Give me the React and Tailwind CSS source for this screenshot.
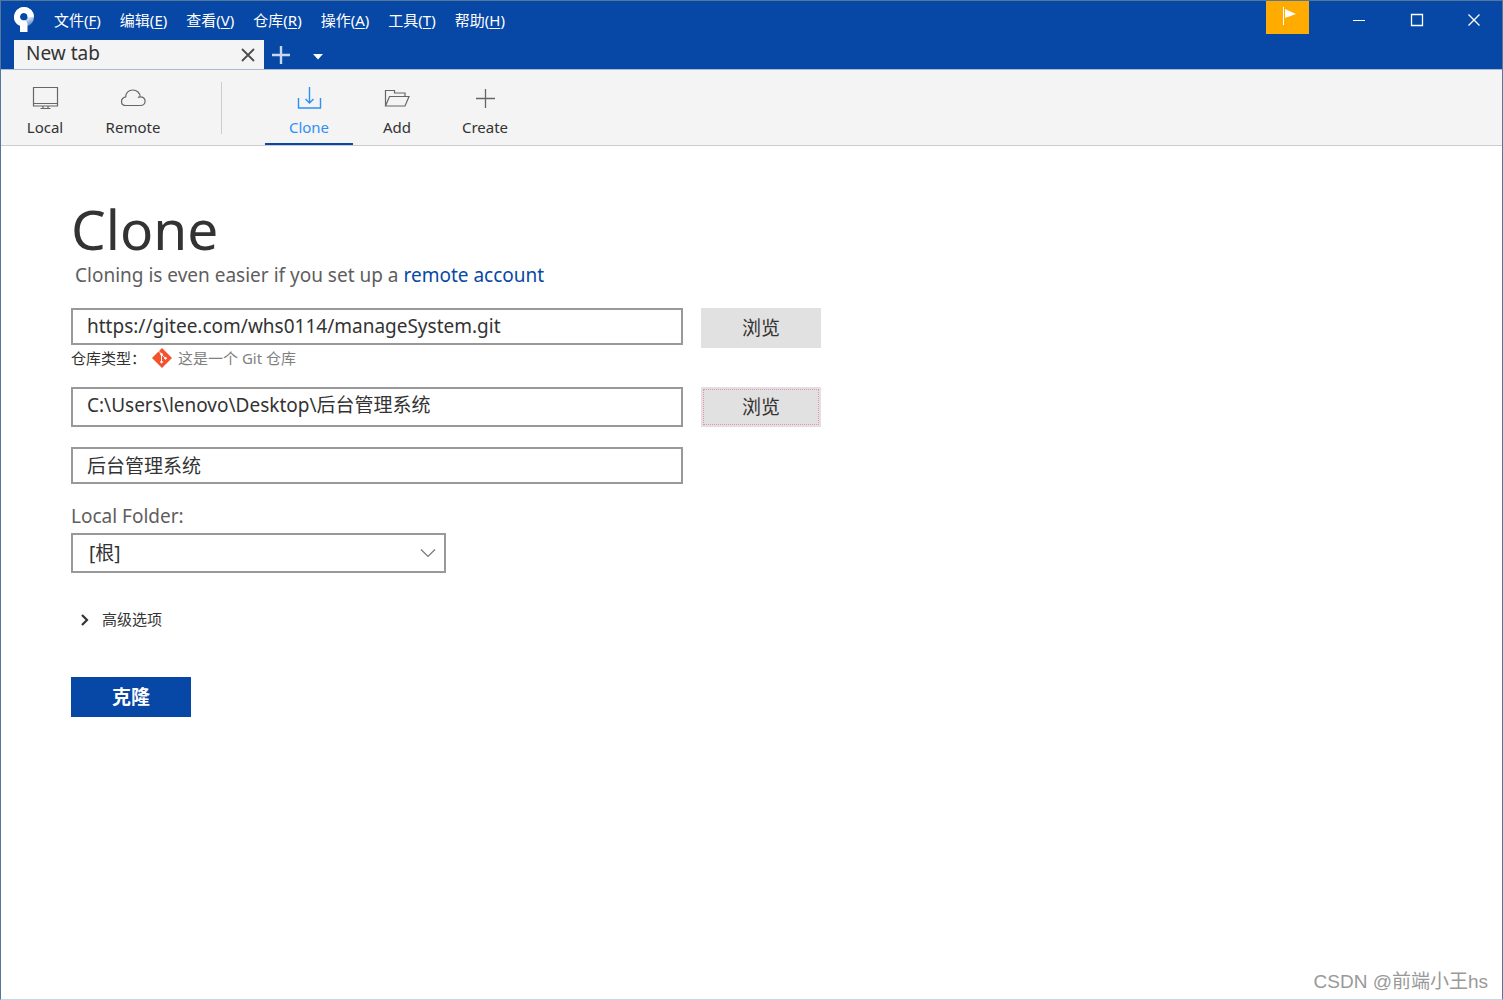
const menus = [
  { label: '文件', hotkey: 'F' },
  { label: '编辑', hotkey: 'E' },
  { label: '查看', hotkey: 'V' },
  { label: '仓库', hotkey: 'R' },
  { label: '操作', hotkey: 'A' },
  { label: '工具', hotkey: 'T' },
  { label: '帮助', hotkey: 'H' },
];

function Logo() {
  return (
    <svg width="20" height="25" viewBox="0 0 20 25" aria-hidden="true">
      <defs>
        <linearGradient id="ring" gradientUnits="userSpaceOnUse" x1="12" y1="10" x2="16" y2="19">
          <stop offset="0" stopColor="#ffffff" />
          <stop offset="1" stopColor="#4a7cc9" />
        </linearGradient>
      </defs>
      <path
        fill="url(#ring)"
        fillRule="evenodd"
        d="M10 0a10 10 0 1 1 0 20A10 10 0 0 1 10 0zm-.2 6a3.800 3.800 0 1 0 0 7.600A3.800 3.800 0 0 0 9.800 6z"
      />
      <path
        fill="#ffffff"
        d="M10 0a10 10 0 0 0-10 10c0 4 2.300 7 6 8.600V25h7.500v-7.500c0-1.500-.7-2.700-2-3.900H9.800A3.800 3.800 0 1 1 13.600 9.800H20A10 10 0 0 0 10 0z"
      />
    </svg>
  );
}

function MonitorIcon() {
  return (
    <svg width="28" height="24" viewBox="0 0 28 24" fill="none" stroke="currentColor" strokeWidth="1.200" aria-hidden="true">
      <path d="M2.500 1.500h24v18.500h-24zM2.500 17.500h24M12 20v2M17 20v2M9.500 22.500h10" />
    </svg>
  );
}

function CloudIcon() {
  return (
    <svg width="28" height="24" viewBox="0 0 28 24" fill="none" stroke="currentColor" strokeWidth="1.200" aria-hidden="true">
      <path d="M7 19.500h14.500c2.600 0 4.600-1.800 4.600-4.300s-2-4.500-4.900-4.300C21 7 18 4 13.800 4c-4 0-7.100 2.700-7.100 6.800C4 11.500 2.500 13 2.500 15.400c0 2.500 2 4.100 4.500 4.100zM21.200 10.900c-.8 0-1.600.2-2.200.6" />
    </svg>
  );
}

function DownloadIcon() {
  return (
    <svg width="28" height="24" viewBox="0 0 28 24" fill="none" stroke="currentColor" strokeWidth="1.400" aria-hidden="true">
      <path d="M3.500 12v10h22V12M14.500 1v16M10.500 13l4 4 4-4" />
    </svg>
  );
}

function FolderIcon() {
  return (
    <svg width="28" height="24" viewBox="0 0 28 24" fill="none" stroke="currentColor" strokeWidth="1.200" aria-hidden="true">
      <path d="M2.500 20V4.500h9V7h10.500v3.500M2.500 20l4-9.500h19.500L22 20z" />
    </svg>
  );
}

function PlusIcon() {
  return (
    <svg width="28" height="24" viewBox="0 0 28 24" fill="none" stroke="currentColor" strokeWidth="1.300" aria-hidden="true">
      <path d="M14.500 3v19M5 12.500h19" />
    </svg>
  );
}

function GitIcon() {
  return (
    <svg className="shrink-0" width="20" height="20" viewBox="0 0 20 20" aria-hidden="true">
      <path fill="#f4512c" d="M10 0l10 10-10 10L0 10z" />
      <g stroke="#ffffff" strokeWidth="1" fill="#ffffff">
        <path d="M6.800 3.200l2.700 3V14M9.500 6.500l4 3.700" fill="none" />
        <circle cx="9.500" cy="6.300" r="0.900" />
        <circle cx="9.500" cy="14" r="0.900" />
        <circle cx="13.500" cy="10.300" r="0.900" />
      </g>
    </svg>
  );
}

function TitleBar() {
  return (
    <header className="flex h-[39px] items-center bg-[#0747a6] pb-0.5 pl-[13px] text-white">
      <Logo />
      <nav className="ml-5 flex flex-1 gap-[19px] text-[15px] leading-5">
        {menus.map((menu) => (
          <button key={menu.hotkey} type="button" className="whitespace-nowrap">
            {menu.label}(<span className="underline underline-offset-2">{menu.hotkey}</span>)
          </button>
        ))}
      </nav>
      <button type="button" aria-label="Notifications" className="mr-[21px] flex h-[33px] w-[43px] justify-center self-start bg-[#ffab00] pt-1.5">
        <svg width="16" height="19" viewBox="0 0 16 19" aria-hidden="true">
          <path stroke="#ffffff" d="M3.500 0v18" />
          <path fill="#ffffff" d="M5 2l11 5-11 4z" />
        </svg>
      </button>
      <button type="button" aria-label="Minimize" className="flex h-full w-[58px] items-center justify-center">
        <svg width="14" height="14" viewBox="0 0 14 14" stroke="currentColor" aria-hidden="true">
          <path d="M1 7.500h12" />
        </svg>
      </button>
      <button type="button" aria-label="Maximize" className="flex h-full w-[58px] items-center justify-center">
        <svg width="14" height="14" viewBox="0 0 14 14" fill="none" stroke="currentColor" strokeWidth="1.300" aria-hidden="true">
          <path d="M1.500 1.500h11v11h-11z" />
        </svg>
      </button>
      <button type="button" aria-label="Close" className="flex h-full w-14 items-center justify-center">
        <svg width="14" height="14" viewBox="0 0 14 14" fill="none" stroke="currentColor" strokeWidth="1.300" aria-hidden="true">
          <path d="M1.500 1.500l11 11M12.500 1.500l-11 11" />
        </svg>
      </button>
    </header>
  );
}

function TabStrip() {
  return (
    <div className="flex h-[29px] bg-[#0747a6] pl-[13px] text-white">
      <div className="flex w-[250px] items-center justify-between bg-[#f4f4f4] pr-2 pl-3 text-[#333333]">
        <span className="pb-1 text-[19px] leading-6">New tab</span>
        <button type="button" aria-label="Close tab">
          <svg width="16" height="16" viewBox="0 0 16 16" stroke="#4d4d4d" strokeWidth="1.800" aria-hidden="true">
            <path d="M2 2l12 12M14 2L2 14" />
          </svg>
        </button>
      </div>
      <button type="button" aria-label="New tab" className="ml-[7px] flex w-5 items-center justify-center">
        <svg width="18" height="18" viewBox="0 0 18 18" stroke="#c9d7ee" strokeWidth="2.400" aria-hidden="true">
          <path d="M9 0v18M0 9h18" />
        </svg>
      </button>
      <button type="button" aria-label="Tab list" className="ml-[17px] flex w-5 items-center justify-center pt-1">
        <svg width="10" height="6" viewBox="0 0 10 6" fill="currentColor" aria-hidden="true">
          <path d="M0 0h10L5 5.500z" />
        </svg>
      </button>
    </div>
  );
}

function ToolButton({ icon, label, active }) {
  return (
    <button
      type="button"
      className={`flex w-[88px] flex-col items-center border-b-2 pt-4 ${
        active ? 'border-[#0747a6] text-[#2f8ff7]' : 'border-transparent text-[#666666]'
      }`}
    >
      {icon}
      <span className={`mt-[5px] text-[15px] leading-6 ${active ? '' : 'text-[#333333]'}`}>{label}</span>
    </button>
  );
}

function Toolbar() {
  return (
    <div className="flex h-[77px] border-t border-b border-t-[#a9b9d3] border-b-[#cccccc] bg-[#f4f4f4]">
      <ToolButton icon={<MonitorIcon />} label="Local" />
      <ToolButton icon={<CloudIcon />} label="Remote" />
      <div className="mt-3 mr-[43px] ml-11 h-[52px] w-px bg-[#cccccc]" />
      <ToolButton icon={<DownloadIcon />} label="Clone" active />
      <ToolButton icon={<FolderIcon />} label="Add" />
      <ToolButton icon={<PlusIcon />} label="Create" />
    </div>
  );
}

function BrowseButton({ focused }) {
  return (
    <button type="button" className="h-10 w-[120px] shrink-0 bg-[#e1e1e1] p-0.5 text-[19px]">
      <span
        className={`flex h-full items-center justify-center border border-dotted ${
          focused ? 'border-[#ee8dbb]' : 'border-transparent'
        }`}
      >
        浏览
      </span>
    </button>
  );
}

export default function App() {
  return (
    <div className="flex min-h-screen flex-col border border-[#55779a] border-b-[#c5d5ea] bg-white font-['Noto_Sans','Noto_Sans_CJK_SC',sans-serif] text-[#333333]">
      <TitleBar />
      <TabStrip />
      <Toolbar />

      <main className="flex-1 px-[70px] pt-12">
        <h1 className="text-[55px] leading-[69px]">Clone</h1>
        <p className="pl-1 text-[19px] leading-6 text-[#5e5e5e]">
          Cloning is even easier if you set up a{' '}
          <a href="#remote" className="text-[#0747a6]">remote account</a>
        </p>

        <form className="mt-[21px] flex w-full max-w-[750px] flex-col">
          <div className="flex h-10 items-start gap-[18px]">
            <input
              aria-label="Source URL"
              defaultValue="https://gitee.com/whs0114/manageSystem.git"
              className="h-[37px] min-w-0 flex-1 border-2 border-[#999999] px-3.5 pb-0.5 text-[19px]"
            />
            <BrowseButton />
          </div>
          <div className="flex h-5 items-center text-[15px] leading-5">
            <span className="w-[81px]">仓库类型：</span>
            <GitIcon />
            <span className="ml-1.5 text-[#808080]">这是一个 Git 仓库</span>
          </div>

          <div className="mt-[19px] flex gap-[18px]">
            <input
              aria-label="Destination path"
              defaultValue="C:\Users\lenovo\Desktop\后台管理系统"
              className="h-10 min-w-0 flex-1 border-2 border-[#999999] px-3.5 pb-1.5 text-[19px]"
            />
            <BrowseButton focused />
          </div>

          <input
            aria-label="Name"
            defaultValue="后台管理系统"
            className="mt-5 mr-[138px] h-[37px] border-2 border-[#999999] px-3.5 pb-0.5 text-[19px]"
          />

          <label htmlFor="folder" className="mt-5 text-[19px] leading-6 text-[#5e5e5e]">Local Folder:</label>
          <div className="mt-[5px] grid w-[375px] items-center">
            <select
              id="folder"
              className="col-start-1 row-start-1 h-10 appearance-none border-2 border-[#999999] bg-white px-4 text-[19px]"
            >
              <option>[根]</option>
            </select>
            <svg className="pointer-events-none col-start-1 row-start-1 mr-2.5 justify-self-end" width="16" height="10" viewBox="0 0 16 10" fill="none" stroke="#777777" strokeWidth="1.200" aria-hidden="true">
              <path d="M1 1.500l7 7 7-7" />
            </svg>
          </div>

          <button type="button" aria-expanded="false" className="mt-9 ml-2 flex items-center gap-3 self-start text-[15px] leading-5">
            <svg width="11" height="14" viewBox="0 0 11 14" fill="none" stroke="#333333" strokeWidth="2.200" aria-hidden="true">
              <path d="M3 3l5 5-5 5" />
            </svg>
            高级选项
          </button>

          <button type="submit" className="mt-12 h-10 w-[120px] bg-[#0747a6] text-[19px] font-bold text-white">
            克隆
          </button>
        </form>
      </main>

      <footer className="px-3.5 pb-[5px] text-right font-['Liberation_Sans','Noto_Sans_CJK_SC',sans-serif] text-[19px] leading-6 text-[#999999]">
        CSDN @前端小王hs
      </footer>
    </div>
  );
}
